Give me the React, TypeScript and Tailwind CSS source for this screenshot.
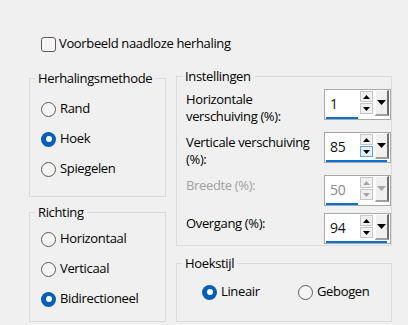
import React from "react";

type Opt = { label: string; checked?: boolean };

function Radio({ checked }: { checked?: boolean }) {
  return checked ? (
    <span className="w-[15px] h-[15px] shrink-0 rounded-full bg-[#005fb8] flex items-center justify-center">
      <span className="w-[6px] h-[6px] rounded-full bg-white" />
    </span>
  ) : (
    <span className="w-[15px] h-[15px] shrink-0 rounded-full border border-[#5c5c5c] bg-[#f5f5f5]" />
  );
}

function RadioRow({ label, checked }: Opt) {
  return (
    <div className="h-[30px] flex items-center gap-[4px]">
      <Radio checked={checked} />
      <span>{label}</span>
    </div>
  );
}

function Group({
  title,
  className,
  children,
}: {
  title: string;
  className: string;
  children: React.ReactNode;
}) {
  return (
    <div className={`border border-[#dcdcdc] ${className}`}>
      <div className="-mt-[10px] ml-[5px] px-[3px] w-fit bg-[#f0f0f0] leading-[18px]">
        {title}
      </div>
      {children}
    </div>
  );
}

function Arrow({ up, color }: { up?: boolean; color: string }) {
  return (
    <svg width="7" height="4" viewBox="0 0 7 4">
      <polygon points={up ? "0,4 7,4 3.5,0" : "0,0 7,0 3.5,4"} fill={color} />
    </svg>
  );
}

function SpinBox({
  value,
  full,
  disabled,
  hot,
}: {
  value: string;
  full?: boolean;
  disabled?: boolean;
  hot?: boolean;
}) {
  const ink = disabled ? "#a6a6a6" : "#000000";
  return (
    <div className="w-[67px] h-[31px] shrink-0 border border-[#a8a8a8] bg-white flex flex-col">
      <div className="h-[26px] flex">
        <div
          className={`flex-1 pl-[5px] pt-[5px] leading-[18px] text-[14px] ${
            disabled ? "text-[#8a8a8a]" : "text-[#111111]"
          }`}
        >
          {value}
        </div>
        <div className="w-[13px] pt-[1px] flex flex-col gap-[1px]">
          <div className="h-[11px] border border-[#c6c6c6] bg-[#f0f0f0] flex items-center justify-center">
            <Arrow up color={ink} />
          </div>
          <div
            className={`h-[11px] border flex items-center justify-center ${
              hot ? "border-[#5ea0e0] bg-[#e5f1fb]" : "border-[#c6c6c6] bg-[#f0f0f0]"
            }`}
          >
            <Arrow color={ink} />
          </div>
        </div>
        <div className="ml-[2px] mr-[1px] w-[14px] bg-[#f0f0f0] border-t border-l border-t-white border-l-white border-r-2 border-b-2 border-r-[#6d6d6d] border-b-[#a0a0a0] flex items-start justify-center pt-[9px]">
          <svg width="9" height="5" viewBox="0 0 9 5">
            <polygon points="0,0 9,0 4.5,5" fill={ink} />
          </svg>
        </div>
      </div>
      <div
        className={`mt-[1px] ml-[1px] h-[2px] bg-[#0a6fd0] ${full ? "w-[61px]" : "w-[32px]"}`}
      />
    </div>
  );
}

function SettingRow({
  label,
  children,
  muted,
}: {
  label: React.ReactNode;
  children: React.ReactNode;
  muted?: boolean;
}) {
  return (
    <div className="flex items-start">
      <div
        className={`w-[139px] pt-[2px] leading-[17px] ${muted ? "text-[#a0a0a0]" : ""}`}
      >
        {label}
      </div>
      {children}
    </div>
  );
}

export default function App() {
  const methods: Opt[] = [
    { label: "Rand" },
    { label: "Hoek", checked: true },
    { label: "Spiegelen" },
  ];
  const directions: Opt[] = [
    { label: "Horizontaal" },
    { label: "Verticaal" },
    { label: "Bidirectioneel", checked: true },
  ];

  return (
    <div
      className="w-[408px] h-[325px] overflow-hidden bg-[#f0f0f0] text-[13px] tracking-[-0.35px] text-black"
      style={{ fontFamily: '"Open Sans", "Noto Sans", sans-serif' }}
    >
      <div className="mt-[33px] ml-[41px] h-[22px] flex items-center gap-[3px]">
        <span className="w-[15px] h-[15px] rounded-[3px] border border-[#5c5c5c] bg-[#f5f5f5]" />
        <span>Voorbeeld naadloze herhaling</span>
      </div>

      <div className="mt-[21px] ml-[29px] flex gap-[10px]">
        <div className="w-[137px] pt-[2px] flex flex-col">
          <Group title="Herhalingsmethode" className="h-[119px]">
            <div className="pt-[7px] pl-[11px]">
              {methods.map((m) => (
                <RadioRow key={m.label} {...m} />
              ))}
            </div>
          </Group>
          <Group title="Richting" className="mt-[15px] h-[110px]">
            <div className="pt-[3px] pl-[11px]">
              {directions.map((d) => (
                <RadioRow key={d.label} {...d} />
              ))}
            </div>
          </Group>
        </div>

        <div className="w-[216px] flex flex-col">
          <Group title="Instellingen" className="h-[170px]">
            <div className="pt-[4px] pl-[9px] flex flex-col gap-[7px]">
              <SettingRow label={<>Horizontale<br />verschuiving (%):</>}>
                <SpinBox value="1" />
              </SettingRow>
              <SettingRow label={<>Verticale verschuiving<br />(%):</>}>
                <SpinBox value="85" full hot />
              </SettingRow>
              <SettingRow label="Breedte (%):" muted>
                <SpinBox value="50" disabled />
              </SettingRow>
              <SettingRow label="Overgang (%):">
                <SpinBox value="94" full />
              </SettingRow>
            </div>
          </Group>
          <Group title="Hoekstijl" className="mt-[17px] h-[59px]">
            <div className="pt-[5px] pl-[25px] flex">
              <div className="w-[96px]">
                <RadioRow label="Lineair" checked />
              </div>
              <RadioRow label="Gebogen" />
            </div>
          </Group>
        </div>
      </div>
    </div>
  );
}
